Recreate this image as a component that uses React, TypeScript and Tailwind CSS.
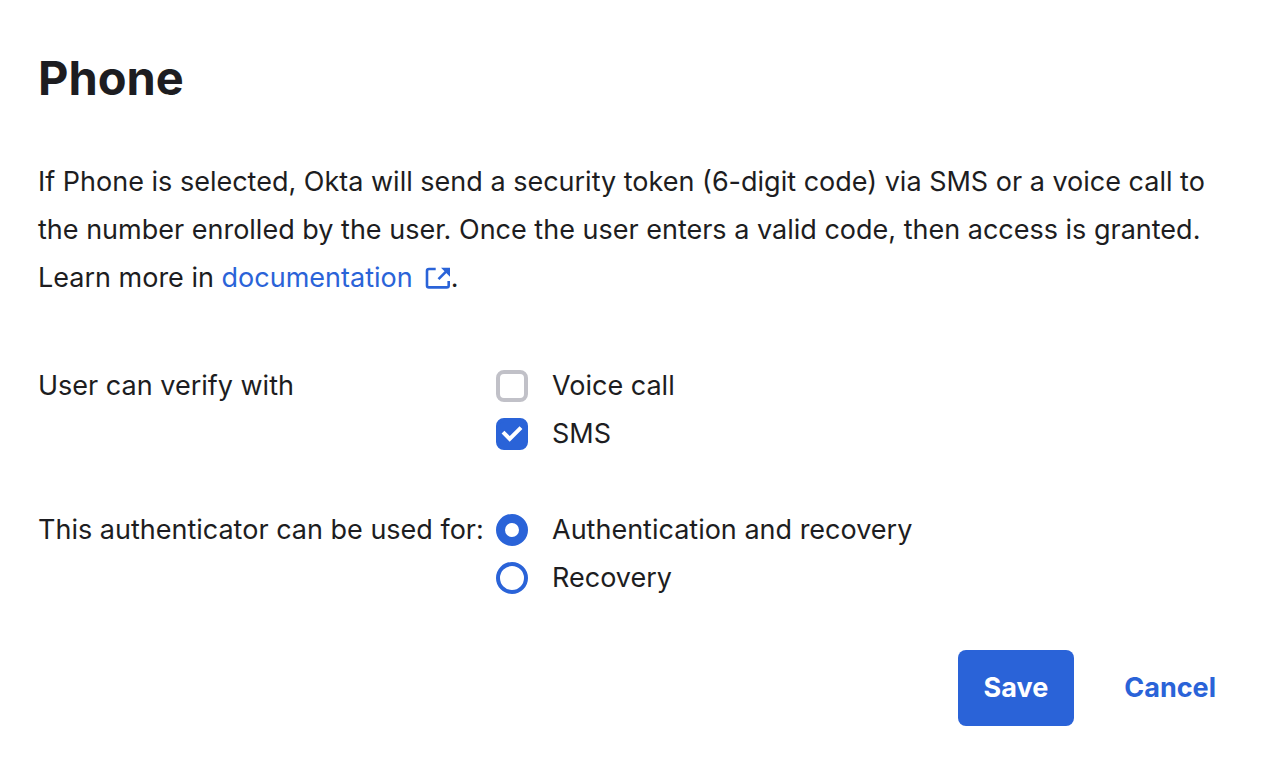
import { useState } from 'react';

const boxBase =
  "size-8 shrink-0 cursor-pointer appearance-none border-4 bg-white";

function CheckOption({ label, checked, onChange }: { label: string; checked: boolean; onChange: () => void }) {
  return (
    <label className="flex h-12 cursor-pointer items-center gap-6">
      <span className="grid size-8 shrink-0 place-items-center">
        <input
          type="checkbox"
          checked={checked}
          onChange={onChange}
          className={`${boxBase} col-start-1 row-start-1 rounded-lg border-[#c1c1c8] checked:border-[#2a63d8] checked:bg-[#2a63d8]`}
        />
        {checked && (
          <svg viewBox="0 0 32 32" className="pointer-events-none col-start-1 row-start-1 size-8" fill="none" stroke="#fff" strokeWidth="4">
            <path d="M7 14.200l6.700 6.700L25 9.700" />
          </svg>
        )}
      </span>
      <span>{label}</span>
    </label>
  );
}

function RadioOption({ label, checked, onChange }: { label: string; checked: boolean; onChange: () => void }) {
  return (
    <label className="flex h-12 cursor-pointer items-center gap-6">
      <input
        type="radio"
        name="usage"
        checked={checked}
        onChange={onChange}
        className={`${boxBase} rounded-full border-[#2a63d8] checked:border-[9px]`}
      />
      <span>{label}</span>
    </label>
  );
}

export default function App() {
  const [voice, setVoice] = useState(false);
  const [sms, setSms] = useState(true);
  const [usage, setUsage] = useState('both');

  return (
    <form
      onSubmit={(e) => e.preventDefault()}
      className="min-h-screen bg-white px-[38px] pt-[46px] pb-12 font-['Inter',sans-serif] text-[27px] leading-12 text-[#1d1d21]"
    >
      <h1 className="text-[47px] leading-16 font-bold">Phone</h1>
      <p className="mt-12">
        If Phone is selected, Okta will send a security token (6-digit code) via SMS or a voice call to
        the number enrolled by the user. Once the user enters a valid code, then access is granted.
        Learn more in{' '}
        <a href="#documentation" className="inline-flex items-center gap-3 align-top text-[#2a63d8]">
          documentation
          <svg viewBox="0 0 26 24" className="h-6 w-[26px]" fill="none" stroke="currentColor" strokeWidth="2.6">
            <path d="M10.700 3H4Q2 3 2 5V19.400Q2 21.400 4 21.400H21.700Q23.700 21.400 23.700 19.400V15" />
            <path d="M13.500 13.200L22 4.700" />
            <path d="M16 1.700H25V10.800Z" fill="currentColor" stroke="none" />
          </svg>
        </a>
        .
      </p>
      <fieldset className="mt-15 flex">
        <legend className="float-left w-[458px]">User can verify with</legend>
        <div>
          <CheckOption label="Voice call" checked={voice} onChange={() => setVoice(!voice)} />
          <CheckOption label="SMS" checked={sms} onChange={() => setSms(!sms)} />
        </div>
      </fieldset>
      <fieldset className="mt-12 flex">
        <legend className="float-left w-[458px]">This authenticator can be used for:</legend>
        <div>
          <RadioOption label="Authentication and recovery" checked={usage === 'both'} onChange={() => setUsage('both')} />
          <RadioOption label="Recovery" checked={usage === 'recovery'} onChange={() => setUsage('recovery')} />
        </div>
      </fieldset>
      <div className="mt-12 flex justify-end gap-6 pr-2 font-bold">
        <button type="submit" className="h-19 rounded-lg bg-[#2a63d8] px-6.5 text-white">Save</button>
        <button type="button" className="h-19 px-6.5 text-[#2a63d8]">Cancel</button>
      </div>
    </form>
  );
}
